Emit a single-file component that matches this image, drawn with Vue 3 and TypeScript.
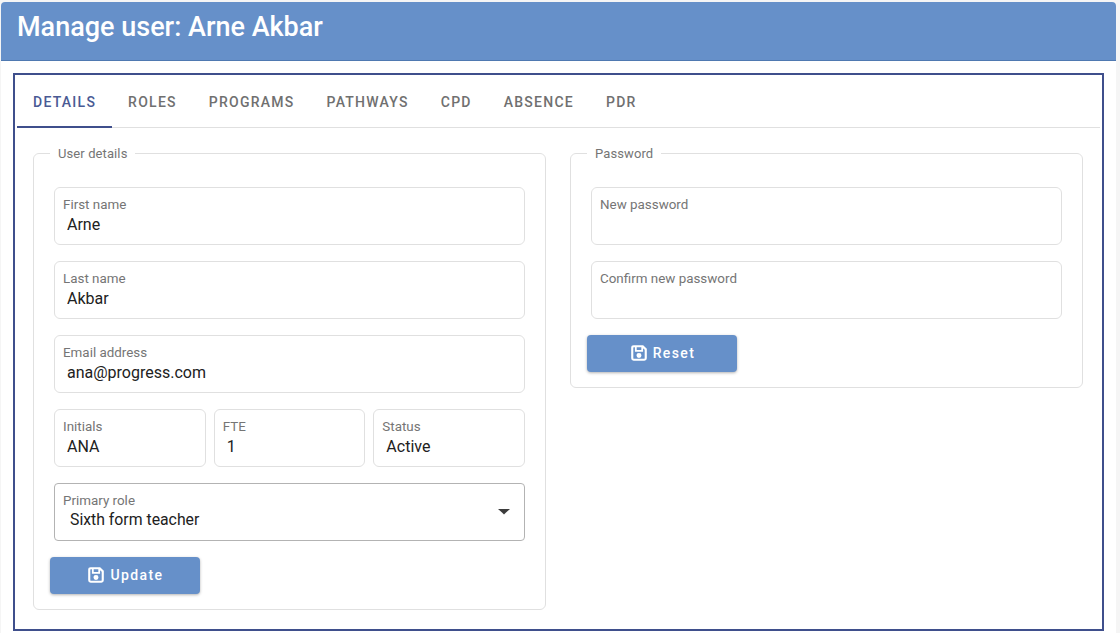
<script setup lang="ts">
import { ref } from 'vue'

interface Field {
  label: string
  value: string
}

const tabs = ['Details', 'Roles', 'Programs', 'Pathways', 'CPD', 'Absence', 'PDR']
const activeTab = ref('Details')

const nameFields: Field[] = [
  { label: 'First name', value: 'Arne' },
  { label: 'Last name', value: 'Akbar' },
  { label: 'Email address', value: 'ana@progress.com' }
]

const shortFields: Field[] = [
  { label: 'Initials', value: 'ANA' },
  { label: 'FTE', value: '1' },
  { label: 'Status', value: 'Active' }
]

const passwordFields: Field[] = [
  { label: 'New password', value: '' },
  { label: 'Confirm new password', value: '' }
]
</script>

<template>
  <div class="page">
    <div class="card">
      <header class="card-header">
        <h1 class="card-title">Manage user: Arne Akbar</h1>
      </header>

      <div class="card-body">
        <div class="tab-box">
          <nav class="tabs">
            <button
              v-for="tab in tabs"
              :key="tab"
              class="tab"
              :class="{ 'tab-active': tab === activeTab }"
              @click="activeTab = tab"
            >
              {{ tab }}
            </button>
          </nav>

          <div class="columns">
            <fieldset class="group">
              <legend class="group-legend">User details</legend>

              <label v-for="f in nameFields" :key="f.label" class="field">
                <span class="field-label">{{ f.label }}</span>
                <input class="field-input" :value="f.value" readonly />
              </label>

              <div class="field-row">
                <label v-for="f in shortFields" :key="f.label" class="field">
                  <span class="field-label">{{ f.label }}</span>
                  <input class="field-input" :value="f.value" readonly />
                </label>
              </div>

              <div class="field field-select">
                <span class="field-label">Primary role</span>
                <span class="select-value">Sixth form teacher</span>
                <svg class="select-arrow" viewBox="0 0 12 7" width="12" height="7">
                  <path d="M0 1h12L8 4.5 6 6.5 4 4.5z" fill="#3c3c3c" />
                </svg>
              </div>

              <button class="save-btn">
                <svg class="save-icon" viewBox="0 0 18 18" width="16" height="16">
                  <path
                    fill-rule="evenodd"
                    fill="#fff"
                    d="M3 0.2h10.7l4.1 4.1V15a2.8 2.8 0 0 1-2.8 2.8H3A2.8 2.8 0 0 1 0.2 15V3A2.8 2.8 0 0 1 3 0.2zM3 2.6a0.4 0.4 0 0 0-0.4 0.4v12a0.4 0.4 0 0 0 0.4 0.4h12a0.4 0.4 0 0 0 0.4-0.4V5.4L13.6 3.6V7.6H4.4V2.6zM6.4 2.6V5.6h5.2V2.6zM9 9.1a2.8 2.8 0 1 1 0 5.6a2.8 2.8 0 0 1 0-5.6z"
                  />
                </svg>
                Update
              </button>
            </fieldset>

            <fieldset class="group">
              <legend class="group-legend">Password</legend>

              <label v-for="f in passwordFields" :key="f.label" class="field">
                <span class="field-label">{{ f.label }}</span>
                <input class="field-input" type="password" :value="f.value" readonly />
              </label>

              <button class="save-btn">
                <svg class="save-icon" viewBox="0 0 18 18" width="16" height="16">
                  <path
                    fill-rule="evenodd"
                    fill="#fff"
                    d="M3 0.2h10.7l4.1 4.1V15a2.8 2.8 0 0 1-2.8 2.8H3A2.8 2.8 0 0 1 0.2 15V3A2.8 2.8 0 0 1 3 0.2zM3 2.6a0.4 0.4 0 0 0-0.4 0.4v12a0.4 0.4 0 0 0 0.4 0.4h12a0.4 0.4 0 0 0 0.4-0.4V5.4L13.6 3.6V7.6H4.4V2.6zM6.4 2.6V5.6h5.2V2.6zM9 9.1a2.8 2.8 0 1 1 0 5.6a2.8 2.8 0 0 1 0-5.6z"
                  />
                </svg>
                Reset
              </button>
            </fieldset>
          </div>
        </div>
      </div>
    </div>
  </div>
</template>

<style>
html,
body {
  margin: 0;
  background: #f5f5f5;
  overflow: hidden;
}
</style>

<style scoped>
* {
  box-sizing: border-box;
}

.page {
  height: 633px;
  padding: 2px 4px 0 1px;
  font-family: Roboto, "Liberation Sans", sans-serif;
  color: #212121;
}

.card {
  height: 100%;
  display: flex;
  flex-direction: column;
  background: #fff;
  border-radius: 4px 4px 0 0;
  overflow: hidden;
}

/* 头部 */
.card-header {
  flex-shrink: 0;
  height: 59px;
  padding: 8px 16px 0;
  background: #6690c9;
  border-bottom: 1px solid #4f79b1;
}

.card-title {
  margin: 0;
  font-size: 27px;
  line-height: 34px;
  font-weight: 500;
  color: #fff;
}

.card-body {
  flex: 1;
  min-height: 0;
  padding: 12px 12px 2px;
}

.tab-box {
  height: 100%;
  padding: 0 2px;
  border: 2px solid #3f4f8c;
}

/* 标签栏 */
.tabs {
  display: flex;
  height: 53px;
  padding-right: 2px;
  border-bottom: 1px solid #e0e0e0;
}

.tab {
  height: 53px;
  padding: 0 16px;
  border: 0;
  background: none;
  font: 500 14px Roboto, sans-serif;
  letter-spacing: 1.25px;
  text-transform: uppercase;
  color: #707070;
  cursor: pointer;
}

.tab-active {
  color: #4a5a94;
  border-bottom: 2px solid #3f4f8c;
  padding-top: 2px;
}

.columns {
  display: grid;
  grid-template-columns: 513px 513px;
  column-gap: 24px;
  align-items: start;
  padding: 18px 0 0 16px;
}

.group {
  margin: 0;
  min-width: 0;
  padding: 26px 20px 15px;
  border: 1px solid #e0e0e0;
  border-radius: 6px;
}

.group-legend {
  margin-left: -4px;
  padding: 0 8px;
  font-size: 13px;
  line-height: 15px;
  letter-spacing: 0.1px;
  color: #757575;
}

.field {
  display: block;
  position: relative;
  height: 58px;
  margin-bottom: 16px;
  padding: 8px 8px 0;
  border: 1px solid #e0e0e0;
  border-radius: 6px;
}

.field-label {
  display: block;
  font-size: 13.4px;
  line-height: 17px;
  color: #757575;
}

.field-input {
  display: block;
  width: 100%;
  height: 22px;
  padding: 0 4px;
  border: 0;
  outline: 0;
  background: none;
  font: 400 16px Roboto, sans-serif;
  color: #212121;
}

.field-row {
  display: grid;
  grid-template-columns: repeat(3, 1fr);
  column-gap: 8px;
}

.field-select {
  border-color: #b3b3b3;
  border-radius: 4px;
}

.select-value {
  display: block;
  padding-left: 7px;
  font-size: 15.8px;
  line-height: 22px;
  color: #212121;
}

.select-arrow {
  position: absolute;
  top: 24px;
  right: 14px;
}

/* 按钮 */
.save-btn {
  display: flex;
  align-items: center;
  justify-content: center;
  gap: 6px;
  width: 150px;
  height: 37px;
  margin: 0 0 0 -4px;
  padding: 0 0 1px 2px;
  border: 0;
  border-radius: 4px;
  background: #6690c9;
  box-shadow: 0 1px 3px rgba(0, 0, 0, 0.3);
  font: 500 14px Roboto, sans-serif;
  letter-spacing: 1.4px;
  color: #fff;
  cursor: pointer;
}

.save-icon {
  flex-shrink: 0;
}
</style>
